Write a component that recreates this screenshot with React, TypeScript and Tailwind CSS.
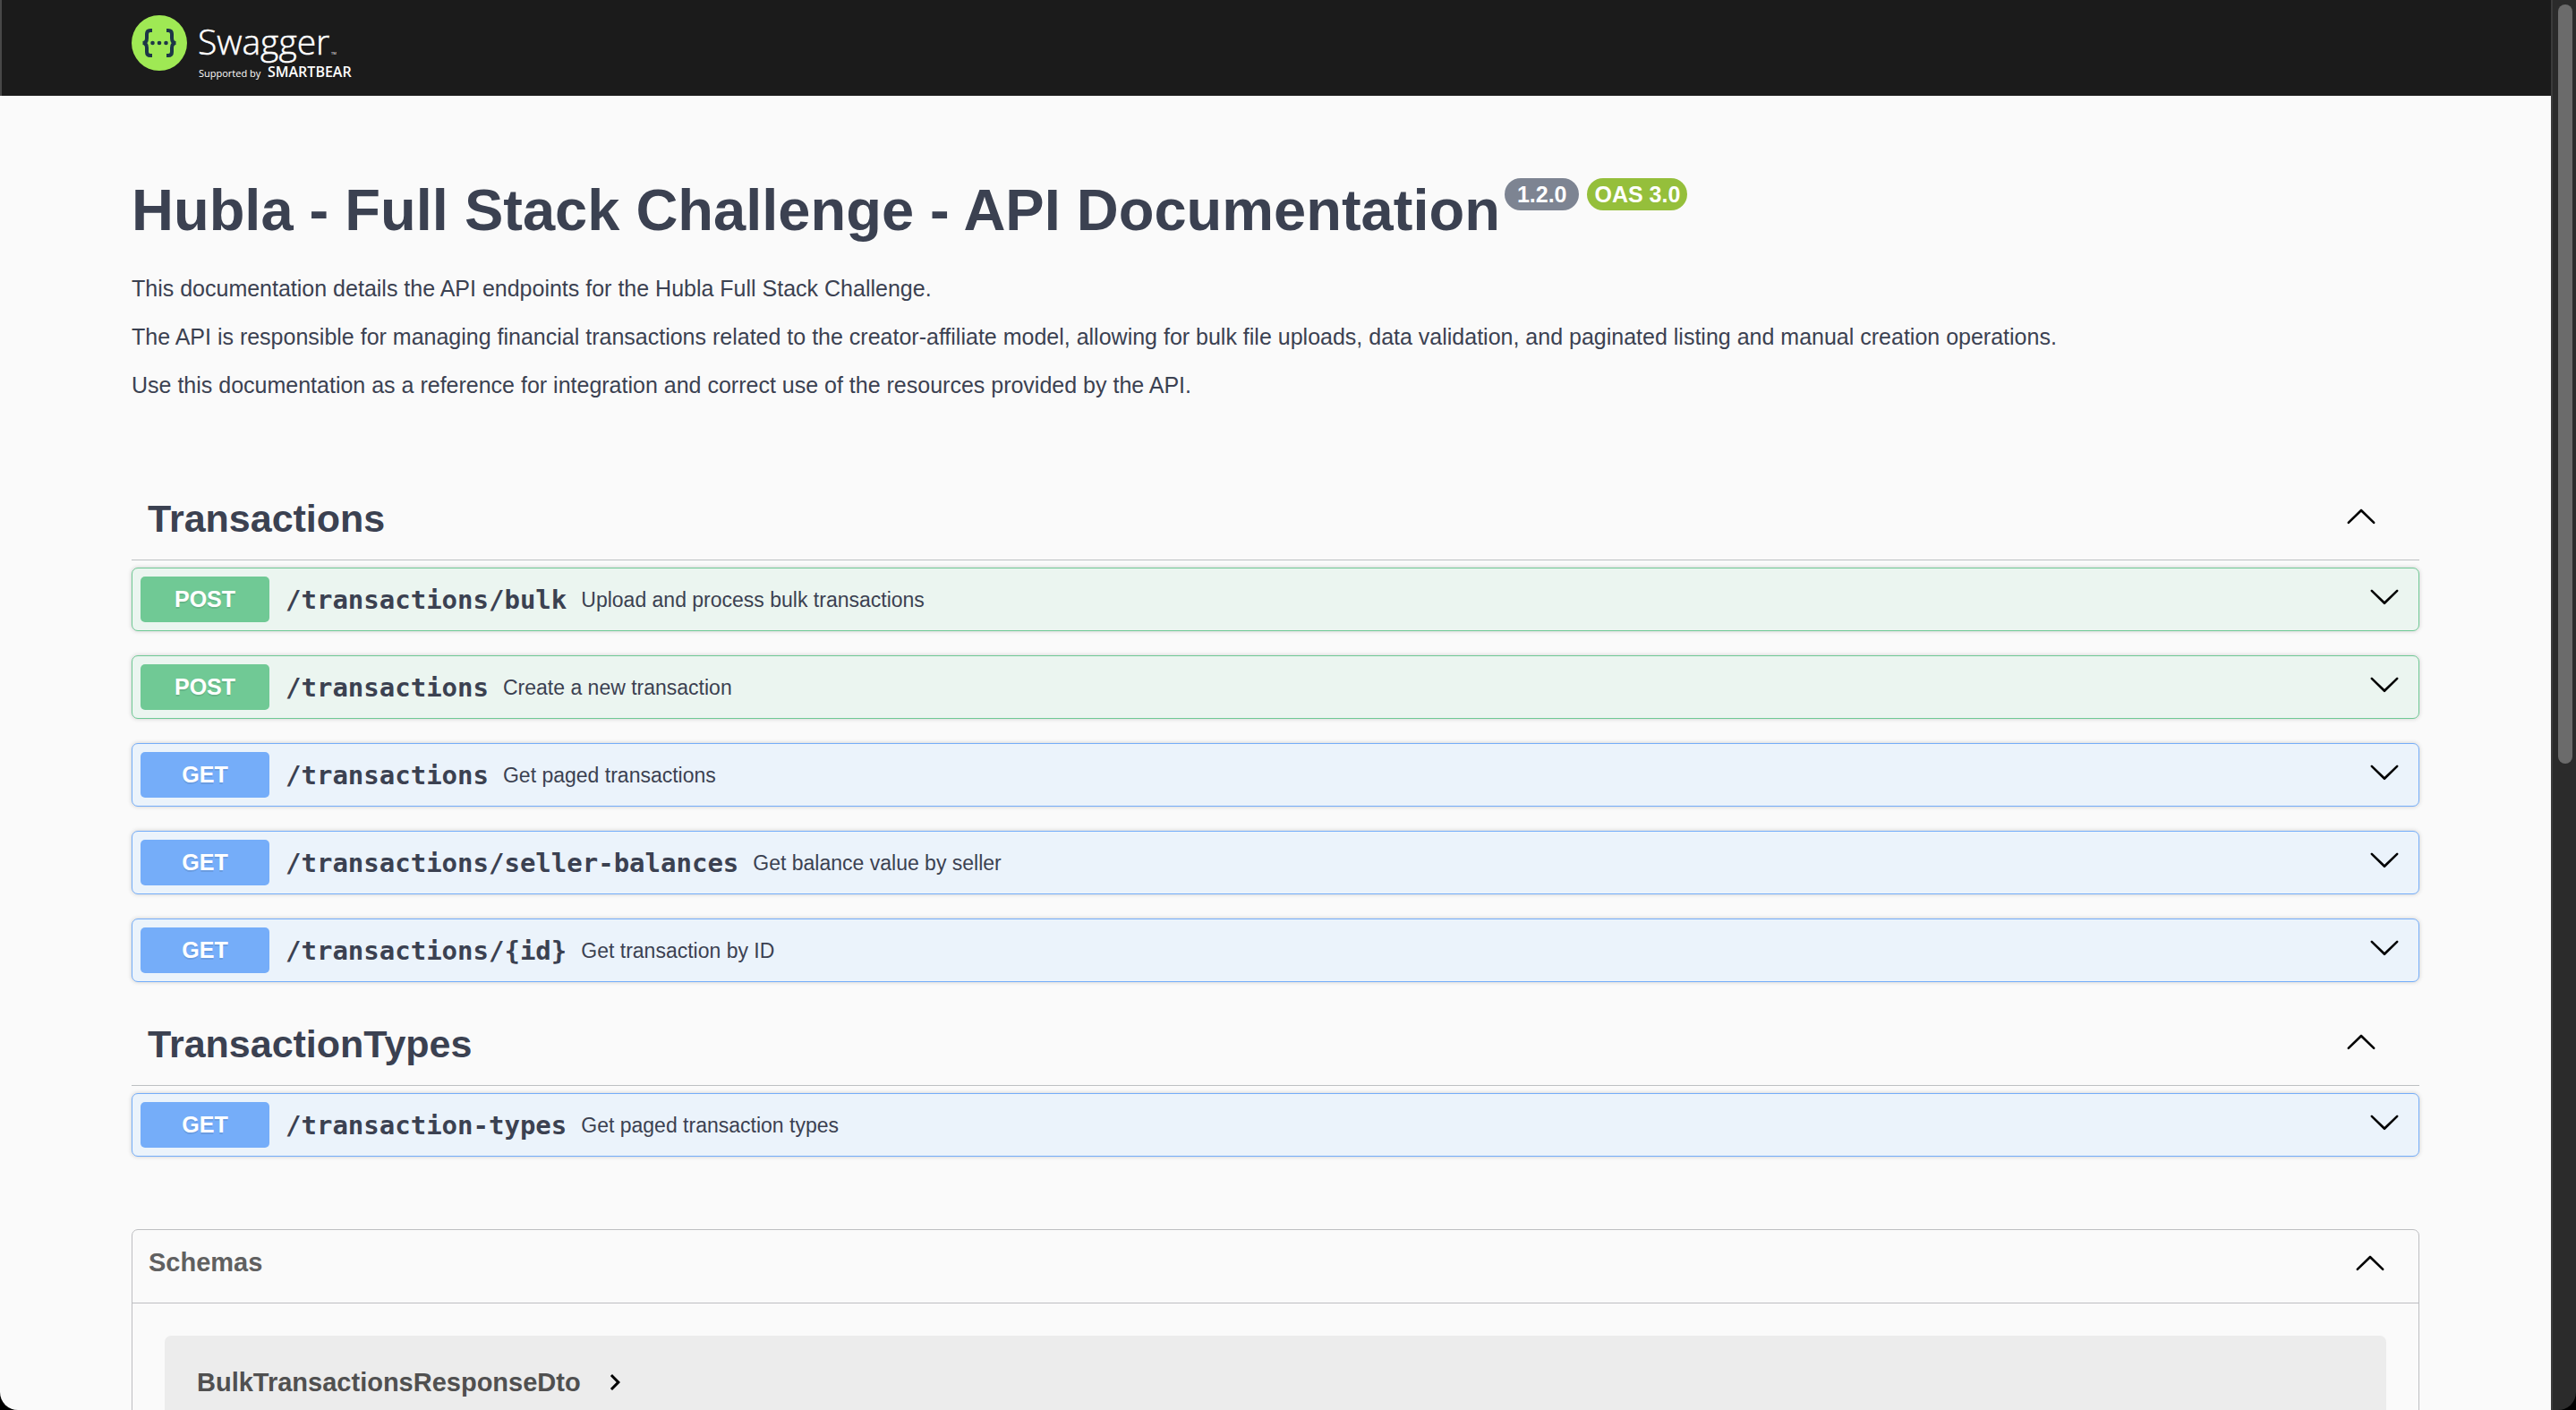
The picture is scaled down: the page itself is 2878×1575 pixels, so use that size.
import React from "react";

type Method = "GET" | "POST";

interface Operation {
  method: Method;
  path: string;
  summary: string;
}

interface Tag {
  name: string;
  operations: Operation[];
}

const tags: Tag[] = [
  {
    name: "Transactions",
    operations: [
      { method: "POST", path: "/transactions/bulk", summary: "Upload and process bulk transactions" },
      { method: "POST", path: "/transactions", summary: "Create a new transaction" },
      { method: "GET", path: "/transactions", summary: "Get paged transactions" },
      { method: "GET", path: "/transactions/seller-balances", summary: "Get balance value by seller" },
      { method: "GET", path: "/transactions/{id}", summary: "Get transaction by ID" },
    ],
  },
  {
    name: "TransactionTypes",
    operations: [
      { method: "GET", path: "/transaction-types", summary: "Get paged transaction types" },
    ],
  },
];

const rowStyle: Record<Method, string> = {
  POST: "border-[#6fc995] bg-[#ebf5f0]",
  GET: "border-[#74adf9] bg-[#ebf3fb]",
};

const badgeStyle: Record<Method, string> = {
  POST: "bg-[#70c995]",
  GET: "bg-[#75adf9]",
};

function ArrowUp() {
  return (
    <svg viewBox="0 0 20 20" className="size-9" fill="currentColor" aria-hidden="true">
      <path d="M17.418 14.908c.272.268.709.268.979 0s.271-.701 0-.969L10.489 6.109c-.27-.268-.707-.268-.979 0L1.602 13.939c-.27.268-.27.701 0 .969s.709.268.979 0L10 7.767z" />
    </svg>
  );
}

function ArrowDown() {
  return (
    <svg viewBox="0 0 20 20" className="size-9" fill="currentColor" aria-hidden="true">
      <path d="M17.418 6.109c.272-.268.709-.268.979 0s.271.701 0 .969l-7.908 7.83c-.27.268-.707.268-.979 0l-7.908-7.83c-.27-.268-.27-.701 0-.969s.709-.268.979 0L10 13.25z" />
    </svg>
  );
}

function ArrowRight() {
  return (
    <svg viewBox="0 0 24 24" className="size-9" fill="currentColor" aria-hidden="true">
      <path d="M10 6L8.59 7.41 13.17 12l-4.58 4.59L10 18l6-6z" />
    </svg>
  );
}

function Logo() {
  return (
    <a href="#" aria-label="Swagger" className="block">
      <svg viewBox="0 0 260 80" className="h-20 w-[260px]">
        <circle cx="31" cy="31" r="31" fill="#9fe954" />
        <g fill="none" stroke="#1d3647" strokeWidth="4">
          <path d="M23 17h-2q-4 0-4 4v4.500q0 5.500-4.500 5.500 4.500 0 4.500 5.500V41q0 4 4 4h2" />
          <path d="M39 17h2q4 0 4 4v4.500q0 5.500 4.500 5.500-4.500 0-4.500 5.500V41q0 4-4 4h-2" />
        </g>
        <g fill="#1d3647">
          <circle cx="23.500" cy="31" r="2.300" />
          <circle cx="31" cy="31" r="2.300" />
          <circle cx="38.500" cy="31" r="2.300" />
        </g>
        <g fill="#fff" fontFamily="'Open Sans', sans-serif">
          <text x="74" y="44" fontSize="39" fontWeight="300" stroke="#fff" strokeWidth="0.5">Swagger</text>
          <text x="223" y="44" fontSize="4">TM</text>
          <text x="75" y="69" fontSize="11">Supported by</text>
          <text x="152" y="69" fontSize="16" fontWeight="600">SMARTBEAR</text>
        </g>
      </svg>
    </a>
  );
}

function OperationRow({ method, path, summary }: Operation) {
  return (
    <div
      className={`flex items-center rounded-[7px] border p-[9px] shadow-[0_0_5px_rgba(0,0,0,0.19)] ${rowStyle[method]}`}
    >
      <button className="flex min-w-0 flex-1 items-center text-left">
        <span
          className={`w-36 rounded-[5px] text-center text-[25px] leading-[51px] font-bold text-white [text-shadow:0_2px_0_rgba(0,0,0,0.1)] ${badgeStyle[method]}`}
        >
          {method}
        </span>
        <span className="pr-4 pl-[18px] font-['DejaVu_Sans_Mono',monospace] text-[29px] leading-9 font-bold">
          {path}
        </span>
        <span className="text-[23px] leading-9">{summary}</span>
      </button>
      <button aria-label={`Expand ${method} ${path}`} className="mr-[11px] mb-2 text-black">
        <ArrowDown />
      </button>
    </div>
  );
}

function TagSection({ name, operations }: Tag) {
  return (
    <section className="mb-[27px]">
      <div className="flex items-center justify-between border-b border-[#bdc0c2] pt-[18px] pr-[47px] pb-[22px] pl-[18px]">
        <h3 className="text-[43px] leading-[48px] font-bold">{name}</h3>
        <button aria-label={`Collapse ${name}`} className="mb-[6px] text-black">
          <ArrowUp />
        </button>
      </div>
      <div className="flex flex-col gap-[27px] pt-2">
        {operations.map((op) => (
          <OperationRow key={op.method + op.path} {...op} />
        ))}
      </div>
    </section>
  );
}

export default function App() {
  return (
    <div className="flex h-screen overflow-hidden bg-black font-['Liberation_Sans',Arial,sans-serif] text-[#3b4151]">
      <div className="flex flex-1 overflow-hidden rounded-b-[20px]">
        <div className="flex-1 overflow-hidden bg-[#fafafa]">
          <header className="border-l-2 border-[#484848] bg-[#1b1b1b] pt-[17px] pr-[147px] pb-[10px] pl-[145px]">
            <Logo />
          </header>
          <main className="px-[147px] pt-[90px]">
            <div className="flex items-start">
              <h1 className="text-[65px] leading-[76px] font-bold">
                Hubla - Full Stack Challenge - API Documentation
              </h1>
              <div className="ml-[5px] flex gap-[9px] pt-[2px] text-[25px] leading-9 font-bold text-white">
                <span className="rounded-full bg-[#7d8492] px-[14px]">1.2.0</span>
                <span className="rounded-full bg-[#95bf3b] px-2">OAS 3.0</span>
              </div>
            </div>
            <div className="mt-[31px] flex flex-col gap-[18px] text-[25px] leading-9">
              <p>This documentation details the API endpoints for the Hubla Full Stack Challenge.</p>
              <p>
                The API is responsible for managing financial transactions related to the creator-affiliate
                model, allowing for bulk file uploads, data validation, and paginated listing and manual
                creation operations.
              </p>
              <p>
                Use this documentation as a reference for integration and correct use of the resources
                provided by the API.
              </p>
            </div>
            <div className="mt-[89px]">
              {tags.map((tag) => (
                <TagSection key={tag.name} {...tag} />
              ))}
            </div>
            <section className="mt-[81px] rounded-[7px] border border-[#bdbec1]">
              <div className="flex items-center justify-between border-b border-[#bdbec1] pt-[18px] pr-9 pb-[27px] pl-[18px]">
                <h4 className="text-[29px] leading-9 font-bold text-[#606060]">Schemas</h4>
                <button aria-label="Collapse Schemas" className="text-black">
                  <ArrowUp />
                </button>
              </div>
              <div className="p-9">
                <div className="flex items-center rounded-[7px] bg-[#ececec] px-9 py-[34px]">
                  <button className="flex items-center gap-5 text-[29px] leading-9 font-bold text-[#505050]">
                    BulkTransactionsResponseDto
                    <span className="text-black">
                      <ArrowRight />
                    </span>
                  </button>
                </div>
              </div>
            </section>
          </main>
        </div>
        <div className="w-7 border-l-2 border-[#3b3b3b] bg-[#2b2b2b] pt-[5px] pl-[6px]">
          <div className="h-[54%] w-4 rounded-full bg-[#6b6b6b]" />
        </div>
      </div>
    </div>
  );
}
